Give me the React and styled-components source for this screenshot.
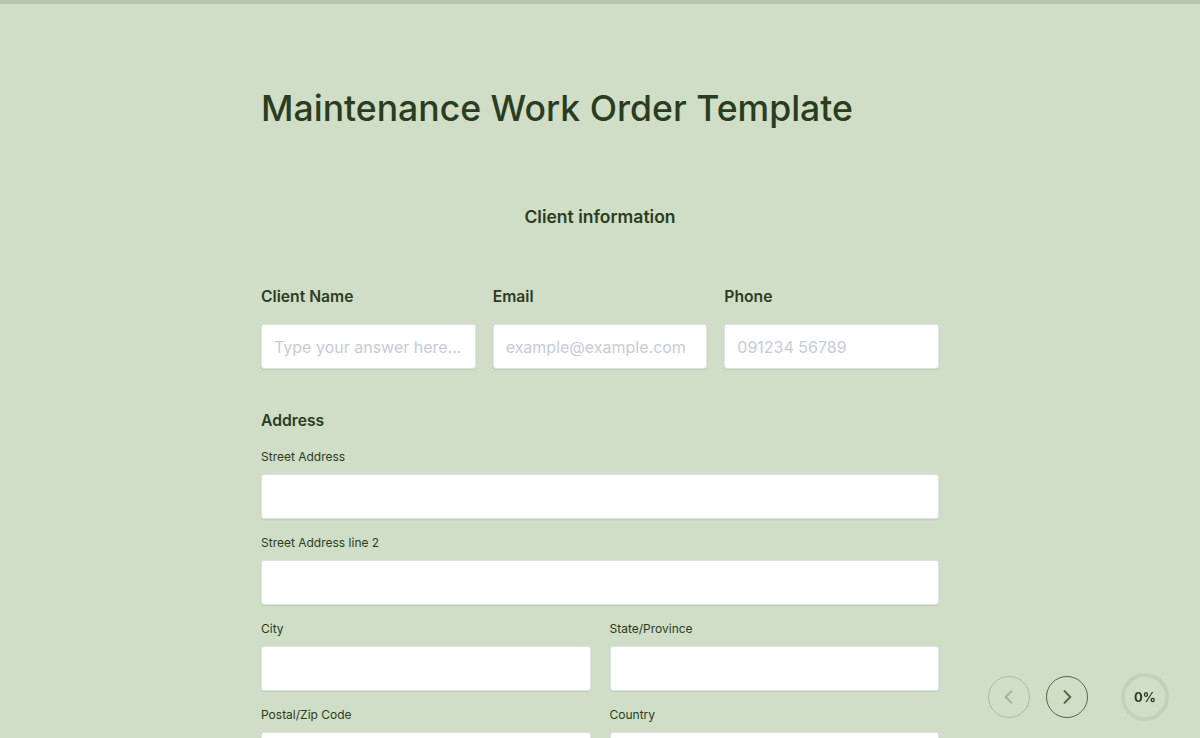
import styled, { createGlobalStyle } from 'styled-components'

const GlobalStyle = createGlobalStyle`
  html, body {
    margin: 0;
    padding: 0;
    background: #d0ddc7;
    font-family: 'Inter', 'Noto Sans', sans-serif;
    color: #2b3d20;
  }
  * { box-sizing: border-box; }
`

const Page = styled.div`
  height: 100vh;
  overflow-y: auto;
  scrollbar-width: none;
  border-top: 4px solid #b4c8ae;
`

const Form = styled.form`
  width: 678px;
  margin: 0 auto;
  padding: 83px 0 120px;
  display: flex;
  flex-direction: column;
`

const Title = styled.h1`
  margin: 0 0 76px;
  font-size: 35.6px;
  line-height: 43px;
  font-weight: 500;
  color: #2b3d20;
`

const SectionTitle = styled.h2`
  margin: 0 0 59px;
  font-size: 17.5px;
  line-height: 22px;
  font-weight: 600;
  text-align: center;
`

const Row = styled.div`
  display: grid;
  grid-template-columns: repeat(${p => p.$cols}, 1fr);
  column-gap: ${p => p.$gap}px;
`

const Field = styled.div`
  display: flex;
  flex-direction: column;
  margin-bottom: ${p => p.$mb || 0}px;
`

const Label = styled.label`
  font-size: 15.7px;
  line-height: 20px;
  font-weight: 600;
  margin-bottom: 17px;
`

const GroupLabel = styled.div`
  font-size: 15.7px;
  line-height: 20px;
  font-weight: 600;
  margin-bottom: 18px;
`

const SubLabel = styled.label`
  font-size: 12px;
  line-height: 16px;
  font-weight: 400;
  margin-bottom: 9px;
`

const Input = styled.input`
  height: 45px;
  width: 100%;
  padding: 0 12px;
  border: 1px solid #dfe3e8;
  border-radius: 3px;
  background: #fff;
  font-family: inherit;
  font-size: 16px;
  color: #2b3d20;
  box-shadow: 0 1px 1px rgba(60, 80, 50, 0.12);
  outline: none;

  &::placeholder {
    color: #c6cbd6;
  }
`

const Nav = styled.div`
  position: fixed;
  right: 31px;
  bottom: 17px;
  display: flex;
  align-items: center;
`

const NavButton = styled.button`
  width: 42px;
  height: 42px;
  border-radius: 50%;
  background: transparent;
  border: 1px solid ${p => (p.disabled ? 'rgba(74, 110, 62, 0.28)' : '#4b6e3f')};
  color: ${p => (p.disabled ? 'rgba(74, 110, 62, 0.35)' : '#4b6e3f')};
  display: flex;
  align-items: center;
  justify-content: center;
  padding: 0;
  margin-right: 16px;
  cursor: pointer;
`

const Progress = styled.div`
  width: 48px;
  height: 48px;
  margin-left: 17px;
  border-radius: 50%;
  border: 4px solid #c2d2b9;
  display: flex;
  align-items: center;
  justify-content: center;
  font-size: 13px;
  font-weight: 700;
  color: #2b3d20;
`

const Chevron = ({ left }) => (
  <svg width="20" height="20" viewBox="0 0 24 24" fill="none" stroke="currentColor" strokeWidth="2.4" strokeLinecap="round" strokeLinejoin="round">
    <path d={left ? 'M15 5l-7 7 7 7' : 'M9 5l7 7-7 7'} />
  </svg>
)

const App = () => (
  <>
    <GlobalStyle />
    <Page>
      <Form onSubmit={e => e.preventDefault()}>
        <Title>Maintenance Work Order Template</Title>
        <SectionTitle>Client information</SectionTitle>

        <Row $cols={3} $gap={17}>
          <Field $mb={42}>
            <Label>Client Name</Label>
            <Input placeholder="Type your answer here..." />
          </Field>
          <Field $mb={42}>
            <Label>Email</Label>
            <Input placeholder="example@example.com" />
          </Field>
          <Field $mb={42}>
            <Label>Phone</Label>
            <Input placeholder="091234 56789" />
          </Field>
        </Row>

        <GroupLabel>Address</GroupLabel>
        <Field $mb={16}>
          <SubLabel>Street Address</SubLabel>
          <Input />
        </Field>
        <Field $mb={16}>
          <SubLabel>Street Address line 2</SubLabel>
          <Input />
        </Field>
        <Row $cols={2} $gap={19}>
          <Field $mb={16}>
            <SubLabel>City</SubLabel>
            <Input />
          </Field>
          <Field $mb={16}>
            <SubLabel>State/Province</SubLabel>
            <Input />
          </Field>
          <Field $mb={16}>
            <SubLabel>Postal/Zip Code</SubLabel>
            <Input />
          </Field>
          <Field $mb={16}>
            <SubLabel>Country</SubLabel>
            <Input />
          </Field>
        </Row>
      </Form>
    </Page>
    <Nav>
      <NavButton disabled aria-label="Previous"><Chevron left /></NavButton>
      <NavButton aria-label="Next"><Chevron /></NavButton>
      <Progress>0%</Progress>
    </Nav>
  </>
)

export default App
